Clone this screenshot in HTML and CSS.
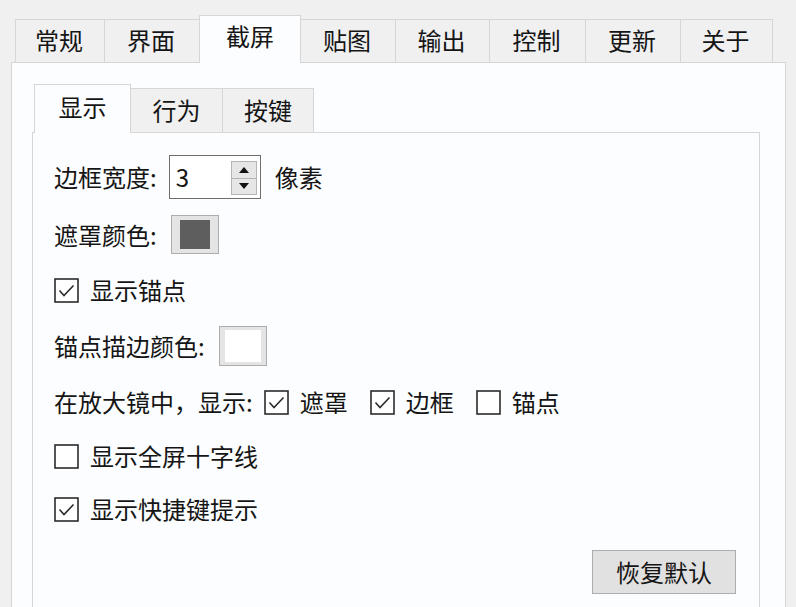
FILE: index.html
```html
<!DOCTYPE html>
<html lang="zh-CN">
<head>
<meta charset="utf-8">
<title>截屏设置</title>
<link rel="stylesheet" href="styles.css">
</head>
<body>
<div class="tabbar">
  <div class="tab t1">常规</div>
  <div class="tab t2">界面</div>
  <div class="tab t3 sel">截屏</div>
  <div class="tab t4">贴图</div>
  <div class="tab t5">输出</div>
  <div class="tab t6">控制</div>
  <div class="tab t7">更新</div>
  <div class="tab t8">关于</div>
</div>
<div class="panel">
  <div class="subbar">
    <div class="subtab s1 sel">显示</div>
    <div class="subtab s2">行为</div>
    <div class="subtab s3">按键</div>
  </div>
  <div class="subpanel">
    <div class="row r1">
      <span class="label">边框宽度:</span>
      <div class="spin">
        <span class="spin-val">3</span>
        <div class="spin-btns">
          <div class="spin-btn"><svg width="10" height="6" viewBox="0 0 10 6"><polygon points="5,0 10,6 0,6" fill="#111"/></svg></div>
          <div class="spin-btn"><svg width="10" height="6" viewBox="0 0 10 6"><polygon points="0,0 10,0 5,6" fill="#111"/></svg></div>
        </div>
      </div>
      <span class="unit">像素</span>
    </div>
    <div class="row r2">
      <span class="label">遮罩颜色:</span>
      <div class="swatch"><div class="swatch-in dark"></div></div>
    </div>
    <div class="row r3">
      <svg class="cb" width="25" height="25" viewBox="0 0 25 25"><rect x="1" y="1" width="23" height="23" fill="#fff" stroke="#2b2b2b" stroke-width="1.6"/><polyline points="5.5,12.5 10,17.5 19.5,7.5" fill="none" stroke="#2b2b2b" stroke-width="1.6"/></svg>
      <span class="cb-text">显示锚点</span>
    </div>
    <div class="row r4">
      <span class="label">锚点描边颜色:</span>
      <div class="swatch sw2"><div class="swatch-in light"></div></div>
    </div>
    <div class="row r5">
      <span class="label lbl-mag">在放大镜中，显示:</span>
      <svg class="cb" width="25" height="25" viewBox="0 0 25 25"><rect x="1" y="1" width="23" height="23" fill="#fff" stroke="#2b2b2b" stroke-width="1.6"/><polyline points="5.5,12.5 10,17.5 19.5,7.5" fill="none" stroke="#2b2b2b" stroke-width="1.6"/></svg>
      <span class="cb-text inline">遮罩</span>
      <svg class="cb" width="25" height="25" viewBox="0 0 25 25"><rect x="1" y="1" width="23" height="23" fill="#fff" stroke="#2b2b2b" stroke-width="1.6"/><polyline points="5.5,12.5 10,17.5 19.5,7.5" fill="none" stroke="#2b2b2b" stroke-width="1.6"/></svg>
      <span class="cb-text inline">边框</span>
      <svg class="cb" width="25" height="25" viewBox="0 0 25 25"><rect x="1" y="1" width="23" height="23" fill="#fff" stroke="#2b2b2b" stroke-width="1.6"/></svg>
      <span class="cb-text">锚点</span>
    </div>
    <div class="row r6">
      <svg class="cb" width="25" height="25" viewBox="0 0 25 25"><rect x="1" y="1" width="23" height="23" fill="#fff" stroke="#2b2b2b" stroke-width="1.6"/></svg>
      <span class="cb-text">显示全屏十字线</span>
    </div>
    <div class="row r7">
      <svg class="cb" width="25" height="25" viewBox="0 0 25 25"><rect x="1" y="1" width="23" height="23" fill="#fff" stroke="#2b2b2b" stroke-width="1.6"/><polyline points="5.5,12.5 10,17.5 19.5,7.5" fill="none" stroke="#2b2b2b" stroke-width="1.6"/></svg>
      <span class="cb-text">显示快捷键提示</span>
    </div>
    <div class="btn-row">
      <div class="btn">恢复默认</div>
    </div>
  </div>
</div>
</body>
</html>
```

FILE: styles.css
```css
* { box-sizing: border-box; }
html, body {
  margin: 0;
  padding: 0;
  background: #f0f0f0;
  overflow: hidden;
  width: 796px;
  height: 607px;
}
body {
  padding-top: 15px;
  font-family: "Noto Sans CJK SC", "Noto Sans", sans-serif;
  font-size: 24px;
  color: #151515;
  line-height: 1;
}

.tabbar {
  display: flex;
  align-items: flex-end;
  margin-left: 15px;
  height: 47px;
  position: relative;
  z-index: 2;
}
.tab {
  height: 43px;
  background: #f0f0f0;
  border-top: 1px solid #d6d6d6;
  border-left: 1px solid #d6d6d6;
  display: flex;
  align-items: center;
  justify-content: center;
  padding-bottom: 3px;
  padding-right: 2px;
}
.tab:last-child { border-right: 1px solid #d6d6d6; }
.tab.sel {
  height: 48px;
  margin-bottom: -1px;
  background: #fcfdfe;
  border-right: 1px solid #d6d6d6;
  padding-bottom: 7px;
  padding-right: 0;
}
.tab.sel + .tab { border-left: none; }
.t1 { width: 89px; }
.t2 { width: 95px; }
.t3 { width: 102px; }
.t4 { width: 94px; }
.t5 { width: 94px; }
.t6 { width: 96px; }
.t7 { width: 95px; }
.t8 { width: 93px; }

.panel {
  margin-left: 11px;
  width: 775px;
  height: 545px;
  background: #fcfdfe;
  border: 1px solid #d6d6d6;
  border-bottom: none;
  padding: 21px 0 0 20px;
  position: relative;
  z-index: 1;
}

.subbar {
  display: flex;
  align-items: flex-end;
  height: 48px;
  position: relative;
  z-index: 2;
}
.subtab {
  height: 44px;
  background: #f0f0f0;
  border-top: 1px solid #d6d6d6;
  border-left: 1px solid #d6d6d6;
  display: flex;
  align-items: center;
  justify-content: center;
  padding-bottom: 2px;
}
.subtab:last-child { border-right: 1px solid #d6d6d6; }
.subtab.sel {
  height: 49px;
  margin-bottom: -1px;
  background: #fcfdfe;
  border-right: 1px solid #d6d6d6;
  padding-bottom: 4px;
}
.subtab.sel + .subtab { border-left: none; }
.s1 { width: 97px; margin-left: 2px; }
.s2 { width: 91px; }
.s3 { width: 92px; }

.subpanel {
  width: 728px;
  height: 475px;
  border: 1px solid #d6d6d6;
  border-bottom: none;
  background: #fcfdfe;
  padding: 22px 23px 0 21px;
  display: flex;
  flex-direction: column;
  gap: 16px;
  position: relative;
  z-index: 1;
}

.row {
  display: flex;
  align-items: center;
  height: 40px;
  flex: none;
}
.r1 { height: 44px; }
.r2 { height: 39px; }
.r6 { margin-top: -2px; }
.r7 { margin-top: -3px; }

.label { margin-right: 14px; }
.r1 .label { margin-right: 13px; }
.lbl-mag { margin-right: 11px; }

.spin {
  width: 92px;
  height: 44px;
  border: 1px solid #6e6e6e;
  background: #fff;
  display: flex;
  align-items: center;
  padding-left: 6px;
  padding-right: 3px;
  margin-left: -1px;
}
.spin-val { flex: 1; font-size: 24px; }
.spin-btns {
  display: flex;
  flex-direction: column;
  width: 26px;
  height: 34px;
  margin-top: 2px;
}
.spin-btn {
  flex: 1;
  background: #e6e6e6;
  border: 1px solid #b4b4b4;
  display: flex;
  align-items: center;
  justify-content: center;
}
.spin-btn + .spin-btn { border-top: none; }
.unit { margin-left: 14px; }

.swatch {
  width: 48px;
  height: 39px;
  border: 1px solid #adadad;
  background: #e4e4e4;
  display: flex;
  align-items: center;
  justify-content: center;
}
.sw2 { height: 40px; }
.swatch-in { width: 30px; height: 29px; }
.swatch-in.dark {
  background: #5e5e5e;
}
.swatch-in.light { background: #fff; width: 36px; height: 32px; }

.cb { flex: none; display: block; }
.cb-text { margin-left: 11px; }
.cb-text.inline { margin-right: 22px; }

.btn-row {
  display: flex;
  justify-content: flex-end;
  margin-top: 5px;
  flex: none;
}
.btn {
  width: 144px;
  height: 44px;
  background: #e1e1e1;
  border: 1px solid #adadad;
  display: flex;
  align-items: center;
  justify-content: center;
}
```
